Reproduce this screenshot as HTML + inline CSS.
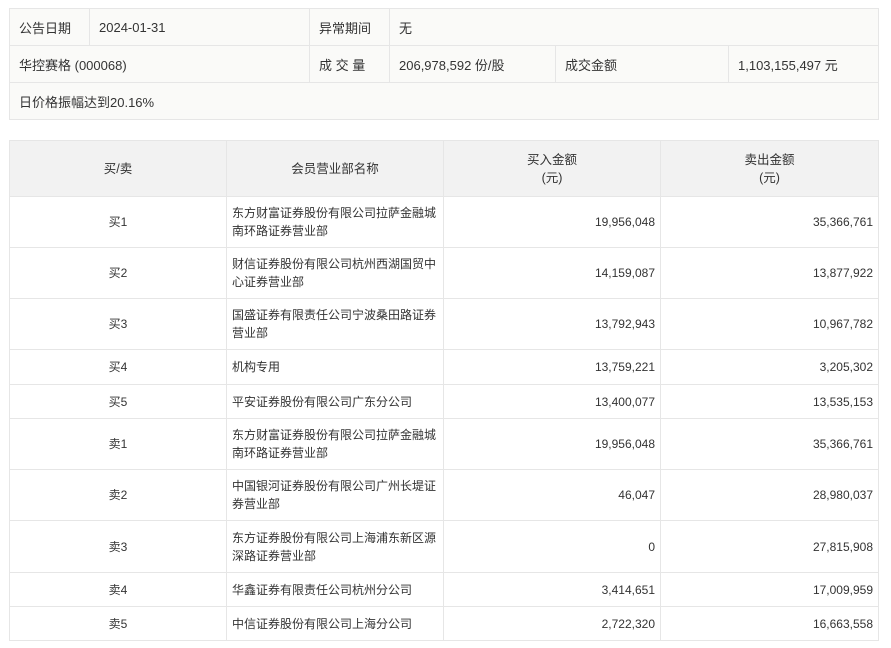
<!DOCTYPE html>
<html><head><meta charset="utf-8"><style>
body{margin:0;background:#fff;font-family:"Liberation Sans","Noto Sans CJK SC",sans-serif;color:#333;}
table{border-collapse:collapse;position:absolute;left:9px;table-layout:fixed;}
td{border:1px solid #e6e6e6;padding:0 5px;}
#t1{top:8px;width:870px;background:#fafaf8;font-size:13px;}
#t1 td{height:36px;padding:0 9px;}
#t2{top:140px;width:870px;font-size:12px;}
#t2 th{background:#f2f2f2;border:1px solid #e6e6e6;font-weight:normal;height:55px;padding:0;line-height:18px;font-size:12.5px;}
#t2 td{line-height:18px;}
.c{text-align:center}.r{text-align:right}
</style></head><body>
<table id="t1">
<colgroup><col style="width:80px"><col style="width:220px"><col style="width:80px"><col style="width:166px"><col style="width:173px"><col></colgroup>
<tr><td>公告日期</td><td>2024-01-31</td><td>异常期间</td><td colspan="3">无</td></tr>
<tr><td colspan="2">华控赛格 (000068)</td><td>成 交 量</td><td>206,978,592 份/股</td><td>成交金额</td><td>1,103,155,497 元</td></tr>
<tr><td colspan="6">日价格振幅达到20.16%</td></tr>
</table>
<table id="t2">
<colgroup><col style="width:217px"><col style="width:217px"><col style="width:217px"><col></colgroup>
<tr><th>买/卖</th><th>会员营业部名称</th><th>买入金额<br>(元)</th><th>卖出金额<br>(元)</th></tr>
<tr style="height:51px"><td class="c">买1</td><td>东方财富证券股份有限公司拉萨金融城南环路证券营业部</td><td class="r">19,956,048</td><td class="r">35,366,761</td></tr>
<tr style="height:51px"><td class="c">买2</td><td>财信证券股份有限公司杭州西湖国贸中心证券营业部</td><td class="r">14,159,087</td><td class="r">13,877,922</td></tr>
<tr style="height:51px"><td class="c">买3</td><td>国盛证券有限责任公司宁波桑田路证券营业部</td><td class="r">13,792,943</td><td class="r">10,967,782</td></tr>
<tr style="height:35px"><td class="c">买4</td><td>机构专用</td><td class="r">13,759,221</td><td class="r">3,205,302</td></tr>
<tr style="height:34px"><td class="c">买5</td><td>平安证券股份有限公司广东分公司</td><td class="r">13,400,077</td><td class="r">13,535,153</td></tr>
<tr style="height:51px"><td class="c">卖1</td><td>东方财富证券股份有限公司拉萨金融城南环路证券营业部</td><td class="r">19,956,048</td><td class="r">35,366,761</td></tr>
<tr style="height:51px"><td class="c">卖2</td><td>中国银河证券股份有限公司广州长堤证券营业部</td><td class="r">46,047</td><td class="r">28,980,037</td></tr>
<tr style="height:52px"><td class="c">卖3</td><td>东方证券股份有限公司上海浦东新区源深路证券营业部</td><td class="r">0</td><td class="r">27,815,908</td></tr>
<tr style="height:34px"><td class="c">卖4</td><td>华鑫证券有限责任公司杭州分公司</td><td class="r">3,414,651</td><td class="r">17,009,959</td></tr>
<tr style="height:34px"><td class="c">卖5</td><td>中信证券股份有限公司上海分公司</td><td class="r">2,722,320</td><td class="r">16,663,558</td></tr>
</table>
</body></html>
